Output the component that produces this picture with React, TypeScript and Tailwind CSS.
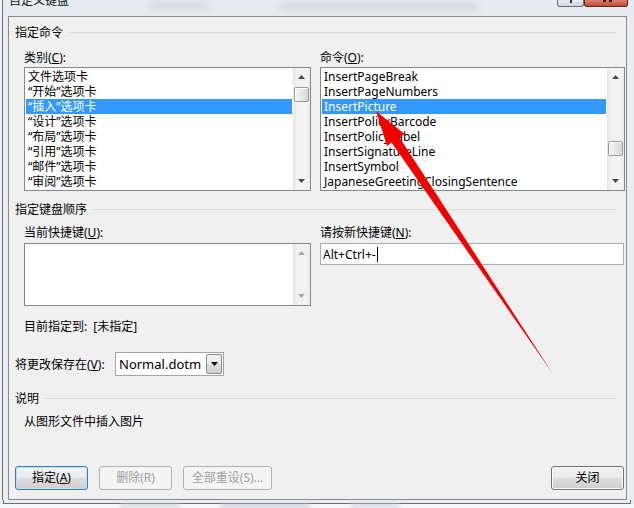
import React from "react";

function Tri({ dir, color = "#4a4a4a" }: { dir: "up" | "down"; color?: string }) {
  return (
    <svg width="7" height="4" viewBox="0 0 7 4">
      {dir === "up" ? <path d="M3.5 0L7 4H0Z" fill={color} /> : <path d="M0 0H7L3.5 4Z" fill={color} />}
    </svg>
  );
}

function Thumb() {
  return (
    <div className="mx-[1px] h-[15px] w-[15px] rounded-[2px] border border-[#9a9a9a] bg-[linear-gradient(90deg,#f6f6f6,#e8e8e8_50%,#d8d8d8)] shadow-[inset_1px_1px_0_#ffffff]" />
  );
}

function ScrollBar({ thumb, thumbPad, disabled }: { thumb: boolean; thumbPad: string; disabled?: boolean }) {
  const c = disabled ? "#a8a8a8" : "#4a4a4a";
  return (
    <div className="flex h-full w-[17px] shrink-0 flex-col bg-[linear-gradient(90deg,#e6e6e6,#f2f2f2_25%,#f2f2f2_80%,#ebebeb)]">
      <div className="flex h-[17px] shrink-0 items-center justify-center pt-[1px]">
        <Tri dir="up" color={c} />
      </div>
      <div className={"flex-1 " + thumbPad}>{thumb && <Thumb />}</div>
      <div className="flex h-[17px] shrink-0 items-center justify-center pb-[1px]">
        <Tri dir="down" color={c} />
      </div>
    </div>
  );
}

function ListBox({ items, selected, thumbPad }: { items: string[]; selected: number; thumbPad: string }) {
  return (
    <div className="flex h-[124px] border border-[#828790] bg-white">
      <div className="flex-1 overflow-hidden px-[1px] py-[1px]">
        {items.map((t, i) => (
          <div
            key={t}
            className={
              "h-[15px] overflow-hidden whitespace-nowrap pl-[2px] leading-[15px] " +
              (i === selected ? "bg-[#3399ff] text-white" : "text-black")
            }
          >
            {t}
          </div>
        ))}
      </div>
      <ScrollBar thumb thumbPad={thumbPad} />
    </div>
  );
}

function Heading({ text, mt }: { text: string; mt: string }) {
  return (
    <div className={"flex h-[15px] items-center pl-[6px] pr-[10px] " + mt}>
      <span className="leading-[15px] text-[#000]">{text}</span>
      <div className="ml-[5px] h-px flex-1 bg-[#d5dfe5]" />
    </div>
  );
}

function Btn({ children, w, kind }: { children: React.ReactNode; w: string; kind?: "default" | "disabled" }) {
  const base = "flex h-[24px] items-center justify-center rounded-[3px] border " + w + " ";
  if (kind === "disabled")
    return <div className={base + "border-[#adb2b5] bg-[#f4f4f4] text-[#a0a0a0]"}>{children}</div>;
  if (kind === "default")
    return (
      <div
        className={
          base +
          "border-[#3c7fb1] bg-[linear-gradient(#f2f2f2_0%,#ebebeb_50%,#dddddd_50%,#cfcfcf_100%)] text-black shadow-[inset_0_0_0_1px_#b6e3fb]"
        }
      >
        {children}
      </div>
    );
  return (
    <div
      className={
        base +
        "border-[#707070] bg-[linear-gradient(#f2f2f2_0%,#ebebeb_50%,#dddddd_50%,#cfcfcf_100%)] text-black shadow-[inset_0_0_0_1px_#fcfcfc]"
      }
    >
      {children}
    </div>
  );
}

export default function App() {
  const cats = [
    "文件选项卡",
    "“开始”选项卡",
    "“插入”选项卡",
    "“设计”选项卡",
    "“布局”选项卡",
    "“引用”选项卡",
    "“邮件”选项卡",
    "“审阅”选项卡",
  ];
  const cmds = [
    "InsertPageBreak",
    "InsertPageNumbers",
    "InsertPicture",
    "InsertPolicyBarcode",
    "InsertPolicyLabel",
    "InsertSignatureLine",
    "InsertSymbol",
    "JapaneseGreetingClosingSentence",
  ];
  return (
    <div className="relative h-[508px] w-[634px] overflow-hidden bg-[#e6ebf0] font-['Noto_Sans','Noto_Sans_CJK_SC',sans-serif] text-[12px] text-black">
      {/* title bar */}
      <div className="flex h-[16px] items-start">
        <div className="h-full w-[3px] border-r border-[#6e6e6e] bg-[#eef1f4]" />
        <div className="-mt-[7px] ml-[6px] leading-[15px] text-[#1a1a1a]">自定义键盘</div>
        <div className="ml-[80px] mt-[2px] h-[8px] w-[60px] rounded-full bg-[#d6dbe0] blur-[3px]" />
        <div className="ml-[70px] mt-[4px] h-[6px] w-[200px] rounded-full bg-[#d0d5db] blur-[3px]" />
        <div className="ml-auto flex h-[7px]">
          <div className="h-[7px] w-[27px] rounded-b-[3px] border border-t-0 border-[#6f6f6f] bg-[linear-gradient(#e8ecf0,#cfd6de)]">
            <div className="ml-[12px] h-[3px] w-[2px] bg-[#333]" />
          </div>
          <div className="h-[7px] w-[44px] rounded-b-[3px] border border-t-0 border-[#5a2a22] bg-[linear-gradient(#d9826d,#c24a33)]">
            <div className="ml-[18px] flex gap-[3px]">
              <div className="h-[2px] w-[3px] bg-[#3a1a14]" />
              <div className="h-[2px] w-[3px] bg-[#3a1a14]" />
            </div>
          </div>
          <div className="w-[6px]" />
        </div>
      </div>

      <div className="flex">
        <div className="flex w-[8px] shrink-0">
          <div className="w-[2px] bg-[#eef1f4]" />
          <div className="w-px bg-[#6e6e6e]" />
          <div className="flex-1 bg-[#eaeef2]" />
        </div>

        {/* client area */}
        <div className="flex h-[484px] w-[619px] shrink-0 flex-col border border-[#8a8a8a] bg-[#f0f0f0]">
          <Heading text="指定命令" mt="mt-[8px]" />

          <div className="mt-[10px] flex gap-[9px] pl-[15px] pr-[1px]">
            <div className="flex w-[287px] flex-col">
              <div className="h-[15px] leading-[15px]">
                类别(<span className="underline">C</span>):
              </div>
              <div className="mt-[2px]">
                <ListBox items={cats} selected={2} thumbPad="pt-[2px]" />
              </div>
            </div>
            <div className="flex w-[305px] flex-col">
              <div className="h-[15px] leading-[15px]">
                命令(<span className="underline">O</span>):
              </div>
              <div className="mt-[2px]">
                <ListBox items={cmds} selected={2} thumbPad="pt-[56px]" />
              </div>
            </div>
          </div>

          <Heading text="指定键盘顺序" mt="mt-[11px]" />

          <div className="mt-[8px] flex gap-[9px] pl-[15px] pr-[1px]">
            <div className="flex w-[287px] flex-col">
              <div className="h-[15px] leading-[15px]">
                当前快捷键(<span className="underline">U</span>):
              </div>
              <div className="mt-[3px] flex h-[63px] border border-[#828790] bg-white">
                <div className="flex-1" />
                <ScrollBar thumb={false} thumbPad="" disabled />
              </div>
            </div>
            <div className="flex w-[304px] flex-col">
              <div className="h-[15px] leading-[15px]">
                请按新快捷键(<span className="underline">N</span>):
              </div>
              <div className="mt-[3px] flex h-[22px] items-center border border-[#abadb3] bg-white pl-[2px]">
                <span className="leading-[15px]">Alt+Ctrl+-</span>
                <span className="ml-[1px] h-[15px] w-px bg-black" />
              </div>
            </div>
          </div>

          <div className="mt-[13px] flex h-[15px] items-center pl-[15px] leading-[15px]">
            <span>目前指定到:</span>
            <span className="ml-[6px]">[未指定]</span>
          </div>

          <div className="mt-[18px] flex h-[24px] items-center pl-[6px]">
            <div className="w-[100px] leading-[15px]">
              将更改保存在(<span className="underline">V</span>):
            </div>
            <div className="flex h-[24px] w-[109px] items-center border border-[#a5a5a5] bg-white">
              <span className="flex-1 pl-[3px] text-[13px] leading-[15px]">Normal.dotm</span>
              <div className="mr-px flex h-[20px] w-[16px] items-center justify-center rounded-[2px] border border-[#8d8d8d] bg-[linear-gradient(#f2f2f2,#ebebeb_50%,#dddddd_50%,#cfcfcf)]">
                <Tri dir="down" color="#000" />
              </div>
            </div>
          </div>

          <Heading text="说明" mt="mt-[15px]" />

          <div className="mt-[8px] h-[15px] pl-[15px] leading-[15px]">从图形文件中插入图片</div>

          <div className="mt-[37px] flex items-center pl-[6px] pr-[2px]">
            <Btn w="w-[73px]" kind="default">
              指定(<span className="underline">A</span>)
            </Btn>
            <div className="ml-[11px]">
              <Btn w="w-[73px]" kind="disabled">
                删除(R)
              </Btn>
            </div>
            <div className="ml-[11px]">
              <Btn w="w-[89px]" kind="disabled">
                全部重设(S)...
              </Btn>
            </div>
            <div className="ml-auto">
              <Btn w="w-[73px]">关闭</Btn>
            </div>
          </div>
        </div>

        <div className="flex flex-1">
          <div className="flex-1 bg-[#eaeef2]" />
        </div>
      </div>

      {/* bottom frame */}
      <div className="flex h-[8px] flex-col">
        <div className="ml-[3px] h-[4px] w-[628px] border-b border-l border-r border-[#6e6e6e] bg-[#eaeef2]" />
        <div className="flex flex-1 gap-[40px] bg-[#f4f6f8] pl-[120px]">
          <div className="h-[3px] w-[60px] rounded-full bg-[#c9ced4] blur-[2px]" />
          <div className="h-[3px] w-[90px] rounded-full bg-[#c2c8ce] blur-[2px]" />
          <div className="h-[3px] w-[50px] rounded-full bg-[#cbd0d6] blur-[2px]" />
        </div>
      </div>

      {/* red annotation arrow */}
      <svg className="pointer-events-none absolute left-0 top-0" width="634" height="508" viewBox="0 0 634 508">
        <polygon
          points="376,111 404.5,134 399.5,137.5 553,374 391.5,142.5 387,146"
          fill="#f20000"
        />
      </svg>
    </div>
  );
}
